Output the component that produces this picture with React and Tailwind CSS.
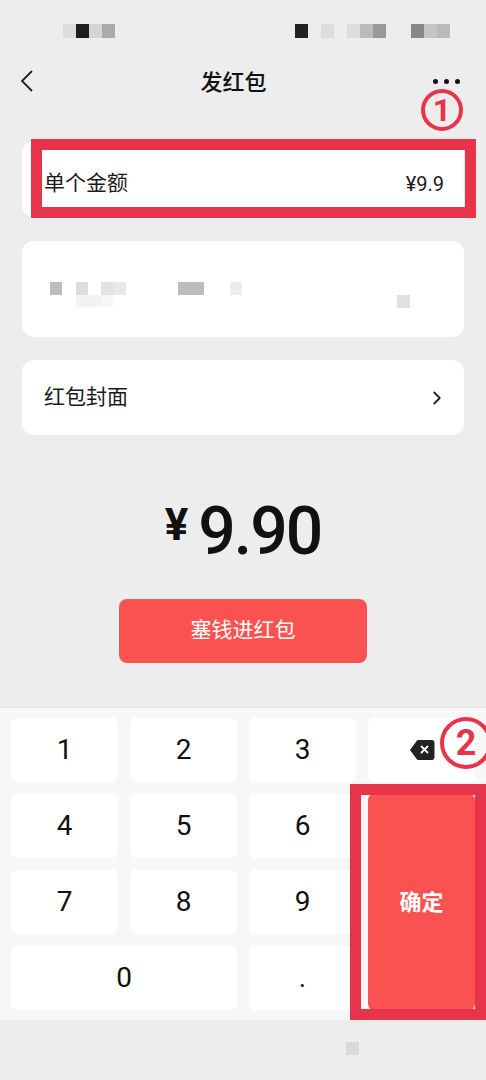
import { ChevronRight } from 'lucide-react';

const Block = ({ c }) => <div className={`w-[13px] h-[14px] ${c}`} />;

const Key = ({ children, className = '' }) => (
  <div
    className={`bg-white rounded-md flex items-center justify-center text-[28px] text-[#111] ${className}`}
  >
    {children}
  </div>
);

const BackspaceIcon = () => (
  <svg width="26" height="22" viewBox="0 0 26 22">
    <path
      d="M8.5 1.5H23a2 2 0 0 1 2 2v15a2 2 0 0 1-2 2H8.5L1.5 11Z"
      fill="#222"
      stroke="#222"
      strokeLinejoin="round"
    />
    <path d="M12.5 7.5l6 6M18.5 7.5l-6 6" stroke="#fff" strokeWidth="1.8" strokeLinecap="round" />
  </svg>
);

export default function App() {
  return (
    <div className="relative w-full h-[1080px] overflow-hidden bg-[#ededed] font-['Roboto','Noto_Sans_CJK_SC',sans-serif] text-[#1a1a1a]">
      {/* status bar (blurred) */}
      <div className="h-[54px] pt-[24px] flex">
        <div className="flex ml-[63px]">
          <Block c="bg-[#dcdcdc]" />
          <Block c="bg-[#1e1e1e]" />
          <Block c="bg-[#d5d5d5]" />
          <Block c="bg-[#aaaaaa]" />
        </div>
        <div className="flex ml-[180px]">
          <Block c="bg-[#222]" />
          <Block c="bg-transparent" />
          <Block c="bg-[#dddddd]" />
          <Block c="bg-transparent" />
          <Block c="bg-[#dddddd]" />
          <Block c="bg-[#bbbbbb]" />
          <Block c="bg-[#999999]" />
        </div>
        <div className="flex ml-[25px]">
          <Block c="bg-[#888888]" />
          <Block c="bg-[#c5c5c5]" />
          <Block c="bg-[#bbbbbb]" />
        </div>
      </div>

      {/* nav */}
      <div className="h-[56px] flex items-center justify-between px-[20px]">
        <svg width="14" height="22" viewBox="0 0 14 22" className="-mt-[2px]">
          <polyline points="12,1 2,11 12,21" fill="none" stroke="#222" strokeWidth="1.8" />
        </svg>
        <div className="text-[22px] font-medium text-[#111]">发红包</div>
        <div className="flex gap-[6px] pr-[6px] -mt-[2px]">
          <span className="w-[5px] h-[5px] rounded-full bg-[#111]" />
          <span className="w-[5px] h-[5px] rounded-full bg-[#111]" />
          <span className="w-[5px] h-[5px] rounded-full bg-[#111]" />
        </div>
      </div>

      {/* form */}
      <div className="px-[22px] pt-[31px]">
        <div className="h-[76px] bg-white rounded-xl flex items-center justify-between pl-[22px] pr-[20px] pt-[9px]">
          <span className="text-[21px]">单个金额</span>
          <span className="text-[20px]">¥9.9</span>
        </div>

        <div className="mt-[24px] h-[96px] bg-white rounded-xl relative">
          {/* blurred content */}
          <div className="absolute left-[28px] top-[41px] flex">
            <div className="w-[12px] h-[13px] bg-[#bdbdbd]" />
            <div className="w-[14px]" />
            <div className="w-[12px] h-[13px] bg-[#dddddd]" />
            <div className="w-[13px]" />
            <div className="w-[12px] h-[13px] bg-[#e2e2e2]" />
            <div className="w-[13px] h-[13px] bg-[#e8e8e8]" />
            <div className="w-[52px]" />
            <div className="w-[26px] h-[13px] bg-[#bdbdbd]" />
            <div className="w-[26px]" />
            <div className="w-[12px] h-[13px] bg-[#ececec]" />
          </div>
          <div className="absolute left-[54px] top-[54px] flex">
            <div className="w-[25px] h-[12px] bg-[#f2f2f2]" />
            <div className="w-[12px] h-[12px] bg-[#f6f6f6]" />
          </div>
          <div className="absolute left-[375px] top-[54px] w-[13px] h-[13px] bg-[#e0e0e0]" />
        </div>

        <div className="mt-[23px] h-[75px] bg-white rounded-xl flex items-center justify-between pl-[22px] pr-[16px]">
          <span className="text-[21px]">红包封面</span>
          <ChevronRight className="w-[22px] h-[22px] text-[#222]" strokeWidth={2} />
        </div>
      </div>

      {/* amount */}
      <div className="mt-[64px] flex justify-center items-start leading-none">
        <span className="text-[44px] font-bold mr-[10px] mt-[4px] text-[#111]">¥</span>
        <span className="text-[66px] font-medium tracking-[-2px] text-[#111]">9.90</span>
      </div>

      <div className="mt-[34px] flex justify-center">
        <button className="w-[248px] h-[64px] rounded-lg bg-[#fa5151] text-white text-[21px]">
          塞钱进红包
        </button>
      </div>

      {/* keypad */}
      <div className="mt-[44px] bg-[#f7f7f7] border-t border-[#e6e6e6] px-[11px] pt-[10px] pb-[10px]">
        <div className="grid grid-cols-4 gap-3 auto-rows-[64px]">
          <Key>1</Key>
          <Key>2</Key>
          <Key>3</Key>
          <Key>
            <BackspaceIcon />
          </Key>
          <Key>4</Key>
          <Key>5</Key>
          <Key>6</Key>
          <div className="row-span-3 rounded-md bg-[#fa5151] flex items-center justify-center text-white text-[22px] font-bold">
            确定
          </div>
          <Key>7</Key>
          <Key>8</Key>
          <Key>9</Key>
          <Key className="col-span-2">0</Key>
          <Key>.</Key>
        </div>
      </div>

      {/* bottom */}
      <div className="h-[60px] relative">
        <div className="absolute left-[346px] top-[22px] w-[13px] h-[13px] bg-[#d9d9d9]" />
      </div>

      {/* annotations */}
      <div className="absolute left-[31px] top-[139px] w-[445px] h-[79px] border-[11px] border-[#e7344a]" />
      <div className="absolute left-[421px] top-[89px] w-[42px] h-[42px] rounded-full border-[4px] border-[#e7344a] flex items-center justify-center text-[#e7344a] text-[32px] font-bold leading-none">
        1
      </div>
      <div className="absolute left-[350px] top-[784px] w-[136px] h-[236px] border-[11px] border-[#e7344a]" />
      <div className="absolute left-[440px] top-[717px] w-[52px] h-[52px] rounded-full border-[4px] border-[#e7344a] flex items-center justify-center text-[#e7344a] text-[36px] font-bold leading-none">
        2
      </div>
    </div>
  );
}
